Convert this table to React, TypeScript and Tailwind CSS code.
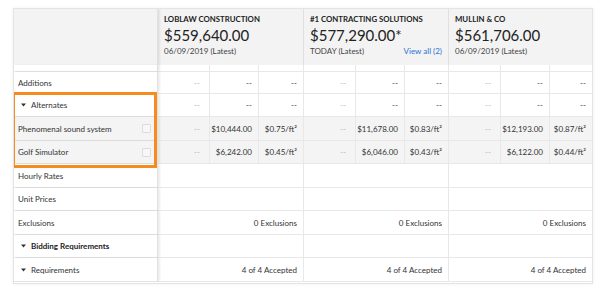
import React from "react";

type Vendor = {
  name: string;
  amount: string;
  date: string;
  viewAll?: boolean;
  alt: [string, string][];
};

const vendors: Vendor[] = [
  {
    name: "LOBLAW CONSTRUCTION",
    amount: "$559,640.00",
    date: "06/09/2019 (Latest)",
    alt: [
      ["$10,444.00", "$0.75/ft²"],
      ["$6,242.00", "$0.45/ft²"],
    ],
  },
  {
    name: "#1 CONTRACTING SOLUTIONS",
    amount: "$577,290.00*",
    date: "TODAY (Latest)",
    viewAll: true,
    alt: [
      ["$11,678.00", "$0.83/ft²"],
      ["$6,046.00", "$0.43/ft²"],
    ],
  },
  {
    name: "MULLIN & CO",
    amount: "$561,706.00",
    date: "06/09/2019 (Latest)",
    alt: [
      ["$12,193.00", "$0.87/ft²"],
      ["$6,122.00", "$0.44/ft²"],
    ],
  },
];

const colW = ["w-[145px]", "w-[145px]", "w-[144px]"];

function Caret() {
  return (
    <svg width="5" height="4" viewBox="0 0 5 4" className="mr-[5px] shrink-0">
      <path d="M0 0.5h5L2.5 3.5z" fill="#333" />
    </svg>
  );
}

function Split({ cells, gray }: { cells: [string, string, string]; gray?: boolean }) {
  return (
    <div className={`flex h-full ${gray ? "bg-[#f4f4f4]" : ""}`}>
      <div className="w-[52px] border-r border-[#e8e8e8] flex items-center justify-end pr-[9px] text-[#b5b5b5]">
        {cells[0]}
      </div>
      <div className="w-[49px] border-r border-[#e8e8e8] flex items-center justify-end pr-[6px] text-[#333]">
        {cells[1]}
      </div>
      <div className="flex-1 flex items-center justify-end pr-[6px] text-[#333]">{cells[2]}</div>
    </div>
  );
}

function Row({
  h,
  label,
  gray,
  children,
}: {
  h: string;
  label: React.ReactNode;
  gray?: boolean;
  children: (i: number) => React.ReactNode;
}) {
  return (
    <div className={`flex ${h} border-b border-[#e8e8e8]`}>
      <div
        className={`w-[144px] shrink-0 flex items-center pl-[4px] pr-[6px] relative z-10 shadow-[2px_0_2px_rgba(0,0,0,0.08)] border-r border-[#e0e0e0] ${
          gray ? "bg-[#f4f4f4]" : "bg-white"
        }`}
      >
        {label}
      </div>
      {vendors.map((_, i) => (
        <div key={i} className={`${colW[i]} shrink-0 ${i > 0 ? "border-l border-[#e8e8e8]" : ""}`}>
          {children(i)}
        </div>
      ))}
    </div>
  );
}

function Checkbox() {
  return <span className="ml-auto w-[9px] h-[9px] border border-[#dcdcdc] bg-[#f7f7f7] rounded-[1px]" />;
}

export default function App() {
  const dash: [string, string, string] = ["--", "--", "--"];
  const single = (text?: string) => () =>
    <div className="h-full flex items-center justify-end pr-[6px] text-[#333]">{text}</div>;

  return (
    <div className="w-[600px] h-[291px] bg-white pt-[8px] pl-[13px] font-['Lato',sans-serif] text-[8px] text-[#333]">
      <div className="relative w-[580px] h-[276px] border border-[#e4e4e4] shadow-[0_0_4px_rgba(0,0,0,0.06)] overflow-hidden">
        {/* header */}
        <div className="flex h-[56px] bg-[#f3f3f3]">
          <div className="w-[144px] shrink-0 relative z-10 shadow-[2px_0_2px_rgba(0,0,0,0.08)] border-r border-[#e0e0e0]" />
          {vendors.map((v, i) => (
            <div
              key={v.name}
              className={`${colW[i]} shrink-0 pt-[5px] pl-[6px] pr-[6px] ${i > 0 ? "border-l border-[#e0e0e0]" : ""}`}
            >
              <div className="font-bold text-[7.8px] leading-[10px] text-[#222]">{v.name}</div>
              <div className="text-[15px] leading-[16px] text-[#222] mt-[3px]">{v.amount}</div>
              <div className="flex justify-between text-[8px] leading-[10px] text-[#444] mt-[3px]">
                <span>{v.date}</span>
                {v.viewAll && <span className="text-[#2a72d9]">View all (2)</span>}
              </div>
            </div>
          ))}
        </div>

        {/* scrolled strip */}
        <Row h="h-[7px]" label={null}>
          {() => <Split cells={["", "", ""]} />}
        </Row>

        <Row h="h-[22px]" label="Additions">
          {() => <Split cells={dash} />}
        </Row>
        <Row
          h="h-[23px]"
          label={
            <span className="flex items-center pl-[3px]">
              <Caret />
              Alternates
            </span>
          }
        >
          {() => <Split cells={dash} />}
        </Row>
        <Row
          h="h-[24px]"
          gray
          label={
            <>
              <span>Phenomenal sound system</span>
              <Checkbox />
            </>
          }
        >
          {(i) => <Split gray cells={["--", vendors[i].alt[0][0], vendors[i].alt[0][1]]} />}
        </Row>
        <Row
          h="h-[23px]"
          gray
          label={
            <>
              <span>Golf Simulator</span>
              <Checkbox />
            </>
          }
        >
          {(i) => <Split gray cells={["--", vendors[i].alt[1][0], vendors[i].alt[1][1]]} />}
        </Row>
        <Row h="h-[24px]" label="Hourly Rates">
          {single()}
        </Row>
        <Row h="h-[23px]" label="Unit Prices">
          {single()}
        </Row>
        <Row h="h-[24px]" label="Exclusions">
          {single("0 Exclusions")}
        </Row>
        <Row
          h="h-[23px]"
          label={
            <span className="flex items-center pl-[3px] font-bold text-[#222]">
              <Caret />
              Bidding Requirements
            </span>
          }
        >
          {single()}
        </Row>
        <Row
          h="h-[24px]"
          label={
            <span className="flex items-center pl-[3px]">
              <Caret />
              Requirements
            </span>
          }
        >
          {single("4 of 4 Accepted")}
        </Row>

        {/* highlight box */}
        <div className="absolute left-[-2px] top-[83px] w-[145px] h-[76px] border-[3px] border-[#f68b1f] z-20 pointer-events-none" />
      </div>
    </div>
  );
}
